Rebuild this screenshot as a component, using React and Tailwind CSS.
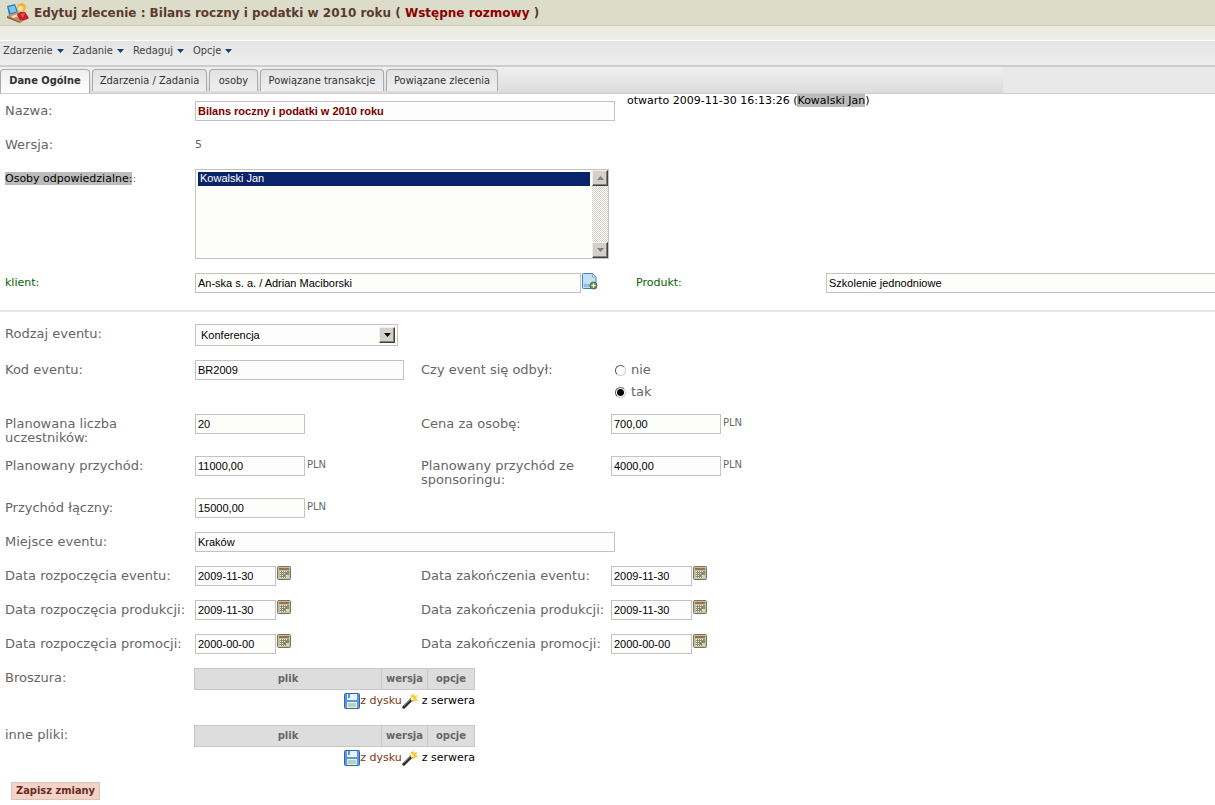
import React, { useState } from "react";

const menuItems = ["Zdarzenie", "Zadanie", "Redaguj", "Opcje"];

const tabs = [
  { label: "Dane Ogólne", width: "w-[90px]" },
  { label: "Zdarzenia / Zadania", width: "w-[115px]" },
  { label: "osoby", width: "w-[49px]" },
  { label: "Powiązane transakcje", width: "w-[124px]" },
  { label: "Powiązane zlecenia", width: "w-[112px]" },
];

const dateRows = [
  { id: "event", name: "eventu", value: "2009-11-30" },
  { id: "production", name: "produkcji", value: "2009-11-30" },
  { id: "promotion", name: "promocji", value: "2000-00-00" },
];

const OrderIcon = () => (
  <svg width="24" height="21" viewBox="0 0 24 21" aria-hidden="true">
    <path d="M1 14 12 10l11 6-9 5z" fill="#c98b52" />
    <path d="m1 14 13 6v1L1 16z" fill="#8d5c3a" />
    <path d="m1 4 8-2 3 8-9 3z" fill="#2c78b8" />
    <path d="m2.500 5 6-1.500 2 6-6 1.800z" fill="#7cc4ee" />
    <path d="m5 14 7-2 2 2-7 2z" fill="#e8e4da" />
    <path d="M11 13q2-4 8-3l4 6q-4 3-9 2z" fill="#c41f2c" />
    <path d="m14 12 3 4 2-5z" fill="#e5565a" />
    <circle cx="15.500" cy="5.500" r="4.500" fill="#f0b63a" />
    <circle cx="14.500" cy="6.500" r="2.500" fill="#f7dfb0" />
  </svg>
);

const CalendarIcon = () => (
  <svg width="14" height="14" viewBox="0 0 14 14" aria-hidden="true">
    <rect x=".5" y=".5" width="13" height="13" rx="1" fill="#c2c1a2" stroke="#77745f" />
    <rect x="2" y="2" width="10" height="2" fill="#9a7048" />
    <rect x="3" y="5" width="9" height="7" fill="#8b8970" />
    <path
      d="M3 5h1v1H3zm2 0h1v1H5zm2 0h1v1H7zm2 0h1v1H9zM3 7h1v1H3zm2 0h1v1H5zm2 0h1v1H7zM3 9h1v1H3zm2 0h1v1H5zm4 0h1v1H9zm-6 2h1v1H3zm2 0h1v1H5zm2 0h1v1H7z"
      fill="#f3f2dc"
    />
    <path d="M10 9h2v3h-3v-2h1z" fill="#d5d4b4" />
  </svg>
);

const AddPageIcon = () => (
  <svg width="16" height="17" viewBox="0 0 16 17" aria-hidden="true">
    <path d="M.5 1.500q0-1 1-1h9l3.500 3.500v11.500H1.500q-1 0-1-1z" fill="#c5e0f6" stroke="#4a80b8" />
    <path d="M10.500.5V4H14z" fill="#eef7ff" stroke="#4a80b8" strokeWidth=".6" />
    <path d="M2 11h7v3H2z" fill="#8dbce6" />
    <circle cx="11.500" cy="12.500" r="3.500" fill="#6d9a55" stroke="#47703a" />
    <path d="M9.500 12.500h4m-2-2v4" stroke="#fff" strokeWidth="1.200" />
  </svg>
);

const DiskIcon = () => (
  <svg width="16" height="16" viewBox="0 0 16 16" aria-hidden="true">
    <rect x=".5" y=".5" width="15" height="15" rx="1" fill="#5c95e0" stroke="#2f66b8" />
    <rect x="3" y="1" width="10" height="6" fill="#eaf2fc" />
    <rect x="4" y="1" width="2" height="4" fill="#5c95e0" />
    <rect x="3" y="9" width="10" height="6" fill="#e9efe0" />
    <path d="M4 11h8m-8 2h8" stroke="#83c070" />
  </svg>
);

const WandIcon = () => (
  <svg width="16" height="16" viewBox="0 0 16 16" aria-hidden="true">
    <path d="m11 0 1.300 2.700L15.500 2l-1.200 3 1.700 2.500-3.200.2L11 10l-1.200-2.800L7 6l2-1.700L8.500 1.500l2 .8z" fill="#f4cf45" />
    <path d="m1.800 14.200 7.500-7.500" stroke="#2c2c2c" strokeWidth="3" strokeLinecap="round" />
    <path d="m2 13 6-6" stroke="#8a8a8a" strokeWidth=".8" />
    <path d="m9 7 2-2" stroke="#fff6cc" strokeWidth="2.500" />
  </svg>
);

const Label = ({ children, ...props }) => (
  <label className="block pt-[3px] pb-[11px] text-[13px] leading-[14px] text-[#666]" {...props}>
    {children}
  </label>
);

const TextInput = ({ className = "", ...props }) => (
  <input
    type="text"
    className={`block h-5 border border-[#c3c3c3] bg-[#fdfdfb] px-0.5 font-['Liberation_Sans',sans-serif] text-[11px] outline-none ${className}`}
    {...props}
  />
);

const Money = ({ id, value }) => (
  <div className="flex items-start gap-0.5">
    <TextInput id={id} defaultValue={value} className="w-[110px] text-black" />
    <span className="pt-0.5 text-[10px] leading-[14px] text-[#666]">PLN</span>
  </div>
);

const DateField = ({ id, value }) => (
  <div className="flex items-start gap-px">
    <TextInput id={id} defaultValue={value} className="w-[81px] text-black" />
    <button type="button" aria-label="Wybierz datę">
      <CalendarIcon />
    </button>
  </div>
);

const Row = ({ children }) => (
  <div className="grid grid-cols-[190px_226px_190px_1fr] items-start">{children}</div>
);

const ScrollButton = ({ up }) => (
  <button
    type="button"
    aria-label={up ? "W górę" : "W dół"}
    className="flex h-4 w-4 items-center justify-center border border-t-[#eee] border-r-[#404040] border-b-[#404040] border-l-[#eee] bg-[#d4d0c8] shadow-[inset_-1px_-1px_#808080]"
  >
    <svg width="7" height="4" viewBox="0 0 7 4" aria-hidden="true">
      <path d={up ? "M0 4h7L3.500 0z" : "M0 0h7L3.500 4z"} fill="#808080" />
    </svg>
  </button>
);

const FileTable = ({ label }) => (
  <div className="grid grid-cols-[189px_1fr] items-start pb-3.5">
    <span className="pt-[3px] text-[13px] leading-[14px] text-[#666]">{label}</span>
    <div className="w-[281px]">
      <table className="w-full table-fixed border-collapse text-[10px] leading-[14px] text-[#666]">
        <thead>
          <tr className="h-[21px] bg-[#ddd]">
            <th className="border border-[#c8c8c8] p-0">plik</th>
            <th className="w-[46px] border border-[#c8c8c8] p-0">wersja</th>
            <th className="w-[47px] border border-[#c8c8c8] p-0">opcje</th>
          </tr>
        </thead>
      </table>
      <div className="flex h-[21px] items-center justify-end text-[11px] leading-[14px]">
        <a href="#dysk" className="flex items-center text-[#7a3a10]">
          <DiskIcon />z dysku
        </a>
        <a href="#serwer" className="flex items-center gap-1 text-black">
          <WandIcon />z serwera
        </a>
      </div>
    </div>
  </div>
);

const App = () => {
  const [activeTab, setActiveTab] = useState(tabs[0].label);
  const [held, setHeld] = useState("tak");

  return (
    <div className="overflow-x-hidden bg-white font-['DejaVu_Sans',Verdana,sans-serif]">
      <header className="border-b border-white bg-linear-to-b from-[#e3e3d3] to-[#eeeee8]">
        <div className="flex h-[26px] items-center gap-1 border-b border-[#cfcfbf] bg-[#dcdccb] pl-[6px]">
          <OrderIcon />
          <h1 className="text-[12px] font-bold whitespace-pre text-[#5e3a2e]">
            Edytuj zlecenie : Bilans roczny i podatki w 2010 roku ({" "}
            <span className="text-[#8b0000]">Wstępne rozmowy</span> )
          </h1>
        </div>
        <div className="h-3.5" />
      </header>

      <nav className="flex h-[26px] items-start gap-[9px] border-b-2 border-[#cdcdcd] bg-linear-to-b from-[#e4e4e4] to-[#eee] pt-[3px] pl-[3px] font-['DejaVu_Sans_Condensed','DejaVu_Sans',sans-serif] text-[11px] text-[#444]">
        {menuItems.map((item) => (
          <button key={item} type="button" className="flex items-center gap-1 leading-[14px]">
            {item}
            <svg width="7" height="4" viewBox="0 0 7 4" aria-hidden="true">
              <path d="M0 0h7L3.500 4z" fill="#17406d" />
            </svg>
          </button>
        ))}
      </nav>

      <div className="border-b border-[#cdcdcd] bg-[#e9e9e9]">
        <div
          role="tablist"
          className="flex h-[26px] w-[1003px] max-w-full items-start gap-0.5 bg-linear-to-b from-[#efefef] to-[#dcdcdc] pt-0.5 font-['DejaVu_Sans_Condensed','DejaVu_Sans',sans-serif] text-[11px] text-[#333]"
        >
          {tabs.map((tab) => (
            <button
              key={tab.label}
              type="button"
              role="tab"
              aria-selected={activeTab === tab.label}
              onClick={() => setActiveTab(tab.label)}
              className={`${tab.width} rounded-t-sm border border-b-0 border-[#aaa] whitespace-nowrap ${
                activeTab === tab.label
                  ? "h-6 bg-linear-to-b from-[#eee] to-white font-bold"
                  : "h-[22px] bg-linear-to-b from-[#e2e2e2] to-[#efefef] pt-0.5"
              }`}
            >
              {tab.label}
            </button>
          ))}
        </div>
      </div>

      <form onSubmit={(e) => e.preventDefault()}>
        <div className="pl-[5px]">
          <div className="flex items-start">
            <div className="w-[190px] pt-[7px]">
              <Label htmlFor="name">Nazwa:</Label>
            </div>
            <div className="pt-[7px] pb-3.5">
              <TextInput
                id="name"
                defaultValue="Bilans roczny i podatki w 2010 roku"
                className="w-[420px] font-bold text-[#7a0000]"
              />
            </div>
            <p className="pl-3 text-[11px] leading-[13px] text-black">
              otwarto 2009-11-30 16:13:26 (
              <a href="#kowalski" className="bg-[#bbb]">
                Kowalski Jan
              </a>
              )
            </p>
          </div>

          <div className="flex h-[34px] items-start">
            <span className="w-[190px] pt-[3px] text-[13px] leading-[14px] text-[#666]">Wersja:</span>
            <span className="pt-[3px] text-[11px] leading-[14px] text-[#666]">5</span>
          </div>

          <div className="flex items-start pb-3.5">
            <label htmlFor="people" className="w-[190px] pt-[3px] text-[11px] leading-[14px] text-[#666]">
              <span className="bg-[#bbb] text-black">Osoby odpowiedzialne:</span>:
            </label>
            <div className="flex h-[90px] w-[414px] border border-[#c3c3c3] bg-[#fdfdfb]">
              <select
                id="people"
                multiple
                defaultValue={["kowalski"]}
                className="h-full min-w-0 flex-1 overflow-hidden bg-transparent p-0.5 font-['Liberation_Sans',sans-serif] text-[11px] outline-none"
              >
                <option
                  value="kowalski"
                  className="h-3.5 bg-[linear-gradient(#0a246a,#0a246a)] px-0.5 py-0 leading-[14px] text-white!"
                >
                  Kowalski Jan
                </option>
              </select>
              <div className="flex w-4 flex-col justify-between bg-[repeating-conic-gradient(#fff_0_25%,#d4d0c8_0_50%)] bg-size-[2px_2px]">
                <ScrollButton up />
                <ScrollButton />
              </div>
            </div>
          </div>

          <div className="flex items-start pb-[17px] text-[11px] leading-[14px] text-[#006400]">
            <label htmlFor="client" className="w-[190px] shrink-0 pt-[3px]">
              klient:
            </label>
            <div className="flex w-[441px] shrink-0 items-start gap-px">
              <TextInput
                id="client"
                defaultValue="An-ska s. a. / Adrian Maciborski"
                className="w-[386px] text-black"
              />
              <button type="button" aria-label="Dodaj klienta">
                <AddPageIcon />
              </button>
            </div>
            <label htmlFor="product" className="w-[190px] shrink-0 pt-[3px]">
              Produkt:
            </label>
            <TextInput
              id="product"
              defaultValue="Szkolenie jednodniowe"
              className="min-w-0 flex-1 border-r-0 text-black"
            />
          </div>
        </div>

        <hr className="border-t-2 border-[#e6e6dc]" />

        <div className="pt-3 pl-[5px]">
          <Row>
            <Label htmlFor="kind">Rodzaj eventu:</Label>
            <div className="relative mb-3.5 h-[22px] w-[203px]">
              <select
                id="kind"
                className="block h-full w-full appearance-none border border-[#c3c3c3] bg-[#fdfdfb] px-[5px] font-['Liberation_Sans',sans-serif] text-[11px] text-black outline-none"
              >
                <option>Konferencja</option>
              </select>
              <span className="pointer-events-none absolute top-[3px] right-[3px] flex h-4 w-4 items-center justify-center border border-t-[#eee] border-r-[#404040] border-b-[#404040] border-l-[#eee] bg-[#d4d0c8] shadow-[inset_-1px_-1px_#808080]">
                <svg width="7" height="4" viewBox="0 0 7 4" aria-hidden="true">
                  <path d="M0 0h7L3.500 4z" fill="#000" />
                </svg>
              </span>
            </div>
          </Row>

          <Row>
            <Label htmlFor="code">Kod eventu:</Label>
            <TextInput id="code" defaultValue="BR2009" className="w-[209px] text-black" />
            <span className="pt-[3px] text-[13px] leading-[14px] text-[#666]">Czy event się odbył:</span>
            <div className="flex flex-col gap-0.5 pb-3">
              {["nie", "tak"].map((value) => (
                <label
                  key={value}
                  className="flex h-5 items-center gap-[5px] pl-1 text-[13px] leading-[14px] text-[#666]"
                >
                  <input
                    type="radio"
                    name="held"
                    value={value}
                    checked={held === value}
                    onChange={() => setHeld(value)}
                    className="size-[11px] appearance-none rounded-full border border-t-[#555] border-r-[#ccc] border-b-[#ccc] border-l-[#555] bg-white checked:bg-[radial-gradient(circle,#000_3px,#fff_4px)]"
                  />
                  {value}
                </label>
              ))}
            </div>
          </Row>

          <Row>
            <Label htmlFor="participants">
              Planowana liczba
              <br />
              uczestników:
            </Label>
            <TextInput id="participants" defaultValue="20" className="w-[110px] text-black" />
            <Label htmlFor="price">Cena za osobę:</Label>
            <Money id="price" value="700,00" />
          </Row>

          <Row>
            <Label htmlFor="income">Planowany przychód:</Label>
            <Money id="income" value="11000,00" />
            <Label htmlFor="sponsoring">Planowany przychód ze sponsoringu:</Label>
            <Money id="sponsoring" value="4000,00" />
          </Row>

          <Row>
            <Label htmlFor="total">Przychód łączny:</Label>
            <div className="pb-3.5">
              <Money id="total" value="15000,00" />
            </div>
          </Row>

          <div className="flex items-start pb-3.5">
            <label htmlFor="place" className="w-[190px] pt-[3px] text-[13px] leading-[14px] text-[#666]">
              Miejsce eventu:
            </label>
            <TextInput id="place" defaultValue="Kraków" className="w-[420px] text-black" />
          </div>

          {dateRows.map((row) => (
            <div
              key={row.id}
              className="grid grid-cols-[190px_226px_190px_1fr] items-start pb-3.5 text-[13px] leading-[14px] whitespace-nowrap text-[#666]"
            >
              <label htmlFor={`${row.id}-start`} className="pt-[3px]">
                Data rozpoczęcia {row.name}:
              </label>
              <DateField id={`${row.id}-start`} value={row.value} />
              <label htmlFor={`${row.id}-end`} className="pt-[3px]">
                Data zakończenia {row.name}:
              </label>
              <DateField id={`${row.id}-end`} value={row.value} />
            </div>
          ))}

          <FileTable label="Broszura:" />
          <FileTable label="inne pliki:" />

          <button
            type="submit"
            className="ml-[6px] block h-[18px] border border-[#d8c4b8] bg-[#f2d3c6] px-1 font-['DejaVu_Sans_Condensed','DejaVu_Sans',sans-serif] text-[11px] leading-4 font-bold text-[#6b2a24]"
          >
            Zapisz zmiany
          </button>
        </div>
      </form>
    </div>
  );
};

export default App;
